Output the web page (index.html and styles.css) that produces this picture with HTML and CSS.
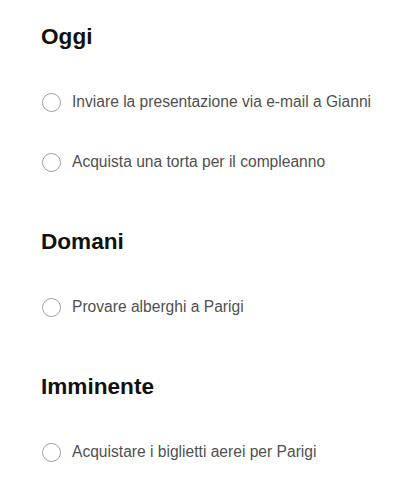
FILE: index.html
```html
<!DOCTYPE html>
<html lang="it">
<head>
<meta charset="utf-8">
<link rel="stylesheet" href="styles.css">
</head>
<body>
<main class="page">
  <section class="group">
    <h2 class="group-title">Oggi</h2>
    <ul class="tasks">
      <li class="task"><span class="check"></span><span class="task-text">Inviare la presentazione via e-mail a Gianni</span></li>
      <li class="task"><span class="check"></span><span class="task-text">Acquista una torta per il compleanno</span></li>
    </ul>
  </section>
  <section class="group">
    <h2 class="group-title">Domani</h2>
    <ul class="tasks">
      <li class="task"><span class="check"></span><span class="task-text">Provare alberghi a Parigi</span></li>
    </ul>
  </section>
  <section class="group">
    <h2 class="group-title">Imminente</h2>
    <ul class="tasks">
      <li class="task"><span class="check"></span><span class="task-text">Acquistare i biglietti aerei per Parigi</span></li>
    </ul>
  </section>
</main>
</body>
</html>
```
FILE: styles.css
```css
html, body {
  margin: 0;
  padding: 0;
  background: #ffffff;
}
body {
  font-family: "Liberation Sans", Arial, sans-serif;
}
.page {
  display: flex;
  flex-direction: column;
  gap: 37px;
  padding: 24px 20px 0 42px;
}
.group-title {
  margin: 0 0 0 -1px;
  font-size: 22.6px;
  line-height: 26px;
  font-weight: 700;
  color: #111111;
}
.tasks {
  list-style: none;
  margin: 22px 0 0;
  padding: 0;
}
.task {
  display: flex;
  align-items: center;
  height: 60px;
}
.check {
  flex: none;
  box-sizing: border-box;
  width: 19px;
  height: 19px;
  border: 1px solid #a0a0a0;
  border-radius: 50%;
  margin-right: 11px;
}
.task-text {
  font-size: 15.6px;
  color: #505050;
}
```
